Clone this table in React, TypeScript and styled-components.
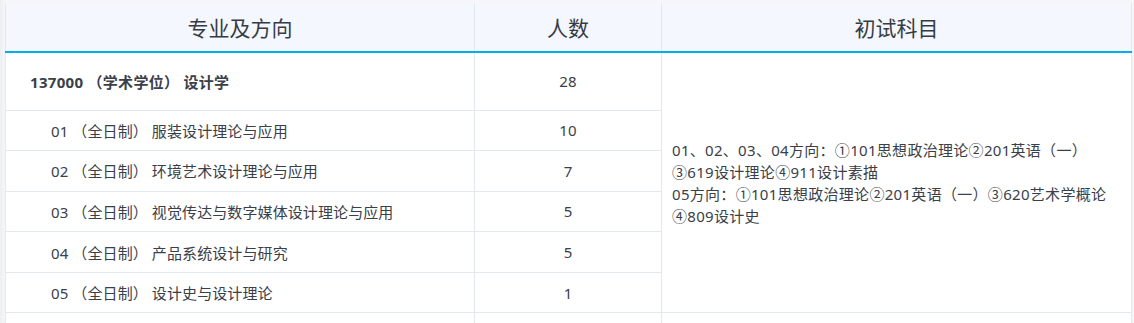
import React from "react";
import styled, { createGlobalStyle } from "styled-components";

const Global = createGlobalStyle`
  html, body { margin: 0; padding: 0; background: #ffffff; }
  body { font-family: "Noto Sans", "Noto Sans CJK SC", sans-serif; }
`;

const Page = styled.div`
  padding: 3px 3px 0 5px;
  background: linear-gradient(to right, #eceff2 0, #f4f6f8 5px, #f4f6f8 100%);
  height: 323px;
  box-sizing: border-box;
  overflow: hidden;
`;

const Table = styled.table`
  width: 1126px;
  border-collapse: collapse;
  table-layout: fixed;
  background: #ffffff;
  color: #3a4049;
  font-family: "Noto Sans", "Noto Sans CJK SC", sans-serif;
`;

const HeadCell = styled.th`
  height: 48px;
  padding: 0;
  background: #f4f7fd;
  font-size: 21px;
  font-weight: 400;
  color: #363c45;
  text-align: center;
  border-left: 1px solid #e3e8ef;
  border-right: 1px solid #e3e8ef;
  border-bottom: 2px solid #00aeec;
`;

const Cell = styled.td<{ $tall?: boolean; $align?: "left" | "center"; $indent?: number; $bold?: boolean }>`
  height: ${(p) => (p.$tall ? "58px" : "40.6px")};
  padding: 0 0 0 ${(p) => p.$indent ?? 0}px;
  font-size: 15px;
  font-weight: ${(p) => (p.$bold ? 700 : 400)};
  letter-spacing: ${(p) => (p.$bold ? "0.3px" : "0.1px")};
  text-align: ${(p) => p.$align ?? "left"};
  border: 1px solid #e3e8ef;
  white-space: nowrap;
  box-sizing: border-box;
`;

const SubjectCell = styled.td`
  padding: 0 10px 0 10px;
  font-size: 15px;
  line-height: 22px;
  letter-spacing: 0.3px;
  vertical-align: middle;
  border: 1px solid #e3e8ef;
`;

const rows = [
  { name: "01 （全日制） 服装设计理论与应用", n: 10 },
  { name: "02 （全日制） 环境艺术设计理论与应用", n: 7 },
  { name: "03 （全日制） 视觉传达与数字媒体设计理论与应用", n: 5 },
  { name: "04 （全日制） 产品系统设计与研究", n: 5 },
  { name: "05 （全日制） 设计史与设计理论", n: 1 },
];

export default function App() {
  return (
    <>
      <Global />
      <Page>
        <Table>
          <colgroup>
            <col style={{ width: 469 }} />
            <col style={{ width: 187 }} />
            <col style={{ width: 470 }} />
          </colgroup>
          <thead>
            <tr>
              <HeadCell>专业及方向</HeadCell>
              <HeadCell>人数</HeadCell>
              <HeadCell>初试科目</HeadCell>
            </tr>
          </thead>
          <tbody>
            <tr>
              <Cell $tall $bold $indent={24}>137000 （学术学位） 设计学</Cell>
              <Cell $tall $align="center">28</Cell>
              <SubjectCell rowSpan={6}>
                01、02、03、04方向：①101思想政治理论②201英语（一）
                <br />
                ③619设计理论④911设计素描
                <br />
                05方向：①101思想政治理论②201英语（一）③620艺术学概论
                <br />
                ④809设计史
              </SubjectCell>
            </tr>
            {rows.map((r) => (
              <tr key={r.name}>
                <Cell $indent={45}>{r.name}</Cell>
                <Cell $align="center">{r.n}</Cell>
              </tr>
            ))}
            <tr>
              <Cell />
              <Cell />
              <Cell />
            </tr>
          </tbody>
        </Table>
      </Page>
    </>
  );
}
